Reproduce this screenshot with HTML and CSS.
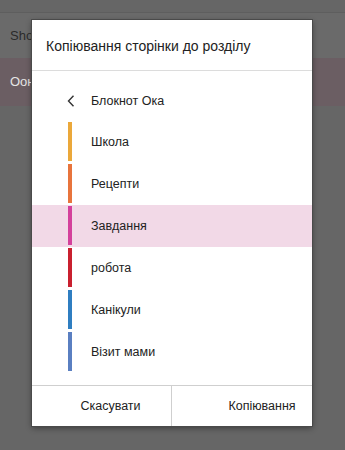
FILE: index.html
```html
<!DOCTYPE html>
<html lang="uk">
<head>
  <meta charset="UTF-8">
  <title>Копіювання сторінки</title>
  <link rel="stylesheet" href="styles.css">
</head>
<body>

  <div class="bg-top"></div>
  <div class="bg-row">Shop</div>
  <div class="bg-row bg-row-sel">Оон</div>

  <div class="dialog">
    <div class="dialog-title">Копіювання сторінки до розділу</div>

    <div class="nav">
      <svg class="chev" width="8" height="12" viewBox="0 0 8 12">
        <path d="M6.5 0.8 L1.5 6 L6.5 11.2" fill="none" stroke="#333" stroke-width="1.4"/>
      </svg>
      <span>Блокнот Ока</span>
    </div>

    <div class="sections">
      <div class="section"><i class="bar" style="background:#eba83a"></i>Школа</div>
      <div class="section"><i class="bar" style="background:#e8743c"></i>Рецепти</div>
      <div class="section active"><i class="bar" style="background:#d4409b"></i>Завдання</div>
      <div class="section"><i class="bar" style="background:#c9202f"></i>робота</div>
      <div class="section"><i class="bar" style="background:#2f7ec1"></i>Канікули</div>
      <div class="section"><i class="bar" style="background:#5a7fc1"></i>Візит мами</div>
    </div>

    <div class="footer">
      <button class="fbtn fbtn-cancel">Скасувати</button>
      <button class="fbtn fbtn-copy">Копіювання</button>
    </div>
  </div>

</body>
</html>
```

FILE: styles.css
```css
body {
  margin: 0;
  background: #666666;
  font-family: 'Liberation Sans', Arial, sans-serif;
  height: 450px;
  overflow: hidden;
}

.bg-top {
  height: 12px;
  border-bottom: 1px solid #5e5e5e;
}

.bg-row {
  height: 45px;
  line-height: 45px;
  padding-left: 10px;
  font-size: 13px;
  color: #2a2a2a;
  background: #6a6a6a;
}

.bg-row-sel {
  height: 48px;
  line-height: 48px;
  background: #6b5e63;
  color: #e6e6e6;
}

.dialog {
  position: absolute;
  left: 32px;
  top: 20px;
  width: 280px;
  height: 406px;
  background: #fff;
  box-shadow: 0 0 0 1px #4a4a4a, 0 2px 6px rgba(0,0,0,0.45);
  display: flex;
  flex-direction: column;
}

.dialog-title {
  height: 50px;
  line-height: 52px;
  padding-left: 14px;
  font-size: 14px;
  color: #222;
  border-bottom: 1px solid #dcdcdc;
}

.nav {
  display: flex;
  align-items: center;
  height: 24px;
  margin: 18px 0 8px 35px;
  font-size: 12.5px;
  color: #222;
}

.chev {
  margin-right: 16px;
}

.sections {
  flex: 1;
}

.section {
  display: flex;
  align-items: center;
  height: 39px;
  padding: 1px 0 2px 36px;
  font-size: 12.5px;
  color: #222;
}

.section.active {
  background: #f2d9e7;
}

.bar {
  width: 4px;
  height: 39px;
  margin-right: 19px;
}

.footer {
  display: flex;
  height: 40px;
  border-top: 1px solid #cfcfcf;
}

.fbtn {
  width: 50%;
  box-sizing: border-box;
  border: none;
  background: #fff;
  font-family: inherit;
  font-size: 12.5px;
  color: #222;
  padding: 0;
}

.fbtn-cancel {
  padding-left: 18px;
  border-right: 1px solid #cfcfcf;
}

.fbtn-copy {
  padding-left: 40px;
}
```
